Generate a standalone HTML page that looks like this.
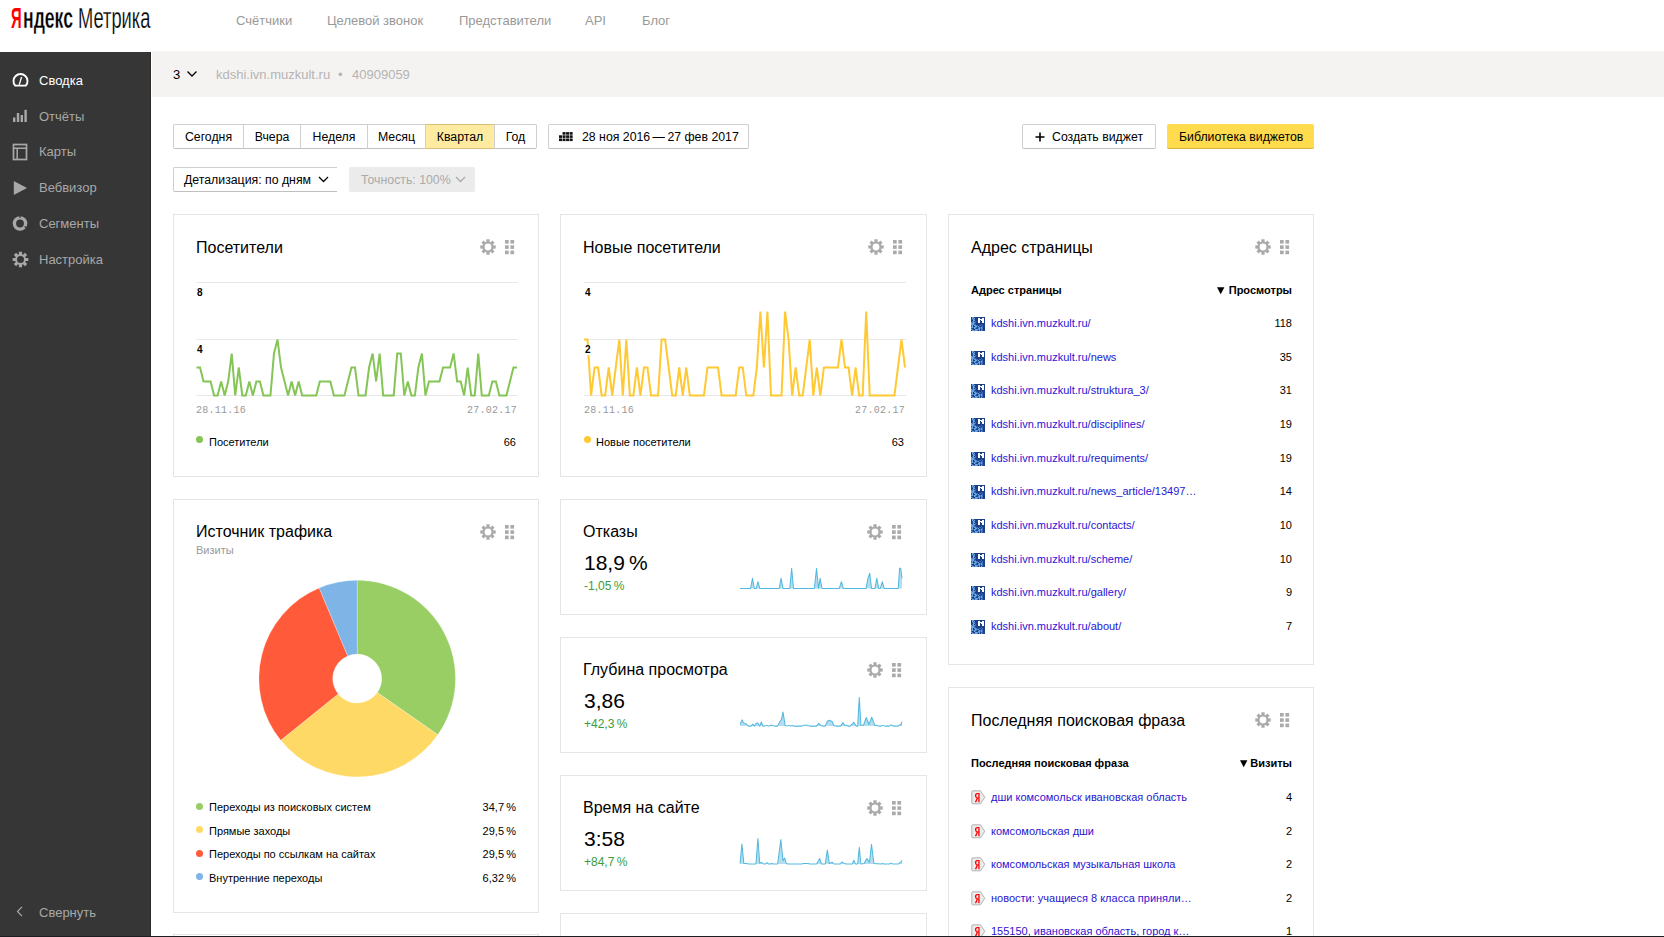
<!DOCTYPE html>
<html><head><meta charset="utf-8"><style>
*{box-sizing:border-box;margin:0;padding:0}
html,body{width:1664px;height:937px;overflow:hidden;background:#fff;font-family:"Liberation Sans",sans-serif;color:#000}
#hdr{position:absolute;left:0;top:0;width:1664px;height:51px;background:#fff}
.logo{position:absolute;top:4px;font-size:28.6px;line-height:28.6px;white-space:nowrap;transform-origin:0 0}
.logo span{display:inline-block;transform-origin:0 0}
.ya{color:#f00}
.nav{position:absolute;top:13px;font-size:13px;line-height:15px;color:#999;white-space:nowrap}
#side{position:absolute;left:0;top:52px;width:151px;height:885px;background:#363636}
#sedge{position:absolute;right:0;top:0;width:1px;height:885px;background:#2a2a2a}
.si{position:absolute;left:39px;font-size:13px;line-height:13px;color:#a8a8a8;white-space:nowrap}
.si.act{color:#fff}
.sic{position:absolute;left:12px}
#band{position:absolute;left:152px;top:51px;width:1512px;height:46px;background:#f4f3f1}
.bt{position:absolute;top:16px;font-size:13px;line-height:15px;white-space:nowrap}
.seg,.btn{position:absolute;height:25px;border:1px solid #cfcfcf;border-bottom-color:#c0c0c0;border-radius:2px;background:#fff}
.dbtn{position:absolute;height:25px;border-radius:2px;background:#ebebeb}
.ybtn{position:absolute;height:25px;border-radius:2px;background:#ffdb4d;border-bottom:1px solid #d8b33c}
.sbact{position:absolute;height:25px;background:#ffeba0;border:1px solid #d6bf78}
.sdiv{position:absolute;width:1px;height:25px;background:#d0d0d0}
.sbt{position:absolute;height:25px;font-size:12.3px;line-height:26px;text-align:center;white-space:nowrap}
.tt{position:absolute;height:25px;font-size:12.3px;line-height:26px;white-space:nowrap}
.w{position:absolute;border:1px solid #e5e5e5;background:#fff}
.t{position:absolute;white-space:nowrap}
.ic{position:absolute;overflow:visible}
.grid{position:absolute;height:1px;background:#e8e8e8}
.dot{position:absolute;width:7px;height:7px;border-radius:50%}
</style></head><body>

<div id="hdr">
  <div class="logo" style="left:11px;color:#f00;font-weight:bold;transform:scaleX(0.52)">Я</div>
  <div class="logo" style="left:23px;font-weight:bold;transform:scaleX(0.616);-webkit-text-stroke:0.3px #fff">ндекс</div>
  <div class="logo" style="left:78px;transform:scaleX(0.64);-webkit-text-stroke:0.25px #fff">Метрика</div>
  <div class="nav" style="left:236px">Счётчики</div>
  <div class="nav" style="left:327px">Целевой звонок</div>
  <div class="nav" style="left:459px">Представители</div>
  <div class="nav" style="left:585px">API</div>
  <div class="nav" style="left:642px">Блог</div>
</div>
<div id="side">
<div class="si act" style="top:22px">Сводка</div>
<svg class="sic" style="top:20px" width="17" height="15" viewBox="0 0 17 15"><path d="M3.2 13.6 A7 7 0 1 1 13.8 13.6 Z" fill="none" stroke="#fff" stroke-width="1.9" stroke-linejoin="round"/><path d="M7.2 12.8 L9.6 5" stroke="#fff" stroke-width="1.3"/></svg>
<div class="si" style="top:58px">Отчёты</div>
<svg class="sic" style="top:57px" width="16" height="14" viewBox="0 0 16 14"><rect x="1" y="8.5" width="2.4" height="4.5" fill="#a8a8a8"/><rect x="4.8" y="4" width="2.4" height="9" fill="#a8a8a8"/><rect x="8.6" y="6" width="2.4" height="7" fill="#a8a8a8"/><rect x="12.4" y="0.8" width="2.4" height="12.2" fill="#a8a8a8"/></svg>
<div class="si" style="top:93px">Карты</div>
<svg class="sic" style="top:91px" width="17" height="18" viewBox="0 0 17 18"><rect x="1.5" y="1.5" width="13" height="15" fill="none" stroke="#a8a8a8" stroke-width="1.7"/><path d="M1.5 5.2 H14.5 M5.2 5.2 V16.5" stroke="#a8a8a8" stroke-width="1.5" fill="none"/></svg>
<div class="si" style="top:129px">Вебвизор</div>
<svg class="sic" style="top:128px" width="17" height="16" viewBox="0 0 17 16"><path d="M1.8 1 L15 8 L1.8 15 Z" fill="#a8a8a8"/></svg>
<div class="si" style="top:165px">Сегменты</div>
<svg class="sic" style="top:163px" width="17" height="17" viewBox="0 0 17 17"><circle cx="8" cy="8.5" r="5.6" fill="none" stroke="#a8a8a8" stroke-width="3.4"/><path d="M8 2.9 V0" stroke="#363636" stroke-width="1.2"/><path d="M12.6 11.6 L14.8 12.8" stroke="#363636" stroke-width="1.2"/></svg>
<div class="si" style="top:201px">Настройка</div>
<svg class="sic" style="top:199px" width="17" height="17" viewBox="-8.5 -8.5 17 17"><path d="M-1.60 -5.16 L-1.59 -7.84 L1.59 -7.84 L1.60 -5.16 L2.52 -4.78 L4.42 -6.67 L6.67 -4.42 L4.78 -2.52 L5.16 -1.60 L7.84 -1.59 L7.84 1.59 L5.16 1.60 L4.78 2.52 L6.67 4.42 L4.42 6.67 L2.52 4.78 L1.60 5.16 L1.59 7.84 L-1.59 7.84 L-1.60 5.16 L-2.52 4.78 L-4.42 6.67 L-6.67 4.42 L-4.78 2.52 L-5.16 1.60 L-7.84 1.59 L-7.84 -1.59 L-5.16 -1.60 L-4.78 -2.52 L-6.67 -4.42 L-4.42 -6.67 L-2.52 -4.78 Z M3.50 0 A3.50 3.50 0 1 0 -3.50 0 A3.50 3.50 0 1 0 3.50 0 Z" fill="#a8a8a8" fill-rule="evenodd"/></svg>
<div class="si" style="top:854px">Свернуть</div>
<svg class="sic" style="left:15px;top:853px" width="10" height="14" viewBox="0 0 10 14"><path d="M7 1.8 L2.5 6.5 L7 11.2" fill="none" stroke="#a8a8a8" stroke-width="1.2"/></svg>
<div id="sedge"></div>
</div>

<div id="band">
  <div class="bt" style="left:21px;color:#000">3</div>
  <svg style="position:absolute;left:34px;top:19px" width="12" height="8" viewBox="0 0 12 8"><path d="M1.5 1.5 L6 6 L10.5 1.5" fill="none" stroke="#000" stroke-width="1.3"/></svg>
  <div class="bt" style="left:64px;color:#b4b4b4">kdshi.ivn.muzkult.ru</div>
  <div class="bt" style="left:186px;color:#b4b4b4">•</div>
  <div class="bt" style="left:200px;color:#b4b4b4">40909059</div>
</div>
<div class="seg" style="left:173px;top:124px;width:364px"></div>
<div class="sbt" style="left:173px;width:71px;top:124px">Сегодня</div>
<div class="sbt" style="left:243px;width:58px;top:124px">Вчера</div>
<div class="sdiv" style="left:243px;top:124px"></div>
<div class="sbt" style="left:300px;width:68px;top:124px">Неделя</div>
<div class="sdiv" style="left:300px;top:124px"></div>
<div class="sbt" style="left:367px;width:59px;top:124px">Месяц</div>
<div class="sdiv" style="left:367px;top:124px"></div>
<div class="sbact" style="left:425px;top:124px;width:70px"></div>
<div class="sbt" style="left:425px;width:70px;top:124px">Квартал</div>
<div class="sdiv" style="left:425px;top:124px"></div>
<div class="sbt" style="left:494px;width:43px;top:124px">Год</div>
<div class="sdiv" style="left:494px;top:124px"></div>
<div class="btn" style="left:548px;top:124px;width:201px"></div>
<svg style="position:absolute;left:559px;top:132px" width="15" height="10" viewBox="0 0 15 10"><rect x="3.55" y="0.10" width="3.0" height="2.6" fill="#111"/><rect x="7.10" y="0.10" width="3.0" height="2.6" fill="#111"/><rect x="10.65" y="0.10" width="3.0" height="2.6" fill="#111"/><rect x="0.00" y="3.30" width="3.0" height="2.6" fill="#111"/><rect x="3.55" y="3.30" width="3.0" height="2.6" fill="#111"/><rect x="7.10" y="3.30" width="3.0" height="2.6" fill="#111"/><rect x="10.65" y="3.30" width="3.0" height="2.6" fill="#111"/><rect x="0.00" y="6.50" width="3.0" height="2.6" fill="#111"/><rect x="3.55" y="6.50" width="3.0" height="2.6" fill="#111"/><rect x="7.10" y="6.50" width="3.0" height="2.6" fill="#111"/><rect x="10.65" y="6.50" width="3.0" height="2.6" fill="#111"/></svg>
<div class="tt" style="left:582px;top:124px">28 ноя 2016&#8201;—&#8201;27 фев 2017</div>
<div class="btn" style="left:1022px;top:124px;width:134px"></div>
<svg style="position:absolute;left:1035px;top:132px" width="10" height="10" viewBox="0 0 10 10"><path d="M5 0.5 V9.5 M0.5 5 H9.5" stroke="#000" stroke-width="1.6"/></svg>
<div class="tt" style="left:1052px;top:124px">Создать виджет</div>
<div class="ybtn" style="left:1167px;top:124px;width:147px"></div>
<div class="tt" style="left:1179px;top:124px">Библиотека виджетов</div>
<div class="btn" style="left:173px;top:167px;width:164px;border-right:none;border-top-right-radius:0;border-bottom-right-radius:0"></div>
<div class="tt" style="left:184px;top:167px">Детализация: по дням</div>
<svg style="position:absolute;left:318px;top:176px" width="11" height="7" viewBox="0 0 11 7"><path d="M1 1 L5.5 5.5 L10 1" fill="none" stroke="#000" stroke-width="1.3"/></svg>
<div class="dbtn" style="left:349px;top:167px;width:126px"></div>
<div class="tt" style="left:361px;top:167px;color:#aaa">Точность: 100%</div>
<svg style="position:absolute;left:455px;top:176px" width="11" height="7" viewBox="0 0 11 7"><path d="M1 1 L5.5 5.5 L10 1" fill="none" stroke="#aaa" stroke-width="1.3"/></svg>
<div class="w" style="left:173px;top:214px;width:366px;height:263px"></div>
<div class="t" style="left:196px;top:240.00px;font-size:16px;line-height:16px;">Посетители</div>
<svg class="ic" style="left:479.0px;top:238px" width="18" height="18" viewBox="-9 -9 18 18"><path d="M-1.63 -5.25 L-1.57 -7.74 L1.57 -7.74 L1.63 -5.25 L2.57 -4.86 L4.36 -6.58 L6.58 -4.36 L4.86 -2.57 L5.25 -1.63 L7.74 -1.57 L7.74 1.57 L5.25 1.63 L4.86 2.57 L6.58 4.36 L4.36 6.58 L2.57 4.86 L1.63 5.25 L1.57 7.74 L-1.57 7.74 L-1.63 5.25 L-2.57 4.86 L-4.36 6.58 L-6.58 4.36 L-4.86 2.57 L-5.25 1.63 L-7.74 1.57 L-7.74 -1.57 L-5.25 -1.63 L-4.86 -2.57 L-6.58 -4.36 L-4.36 -6.58 L-2.57 -4.86 Z M3.40 0 A3.40 3.40 0 1 0 -3.40 0 A3.40 3.40 0 1 0 3.40 0 Z" fill="#aaa" fill-rule="evenodd"/></svg><svg class="ic" style="left:505.0px;top:240px" width="10" height="16" viewBox="0 0 10 16"><rect x="0.00" y="0.00" width="3.7" height="3.6" fill="#aaa"/><rect x="5.40" y="0.00" width="3.7" height="3.6" fill="#aaa"/><rect x="0.00" y="5.30" width="3.7" height="3.6" fill="#aaa"/><rect x="5.40" y="5.30" width="3.7" height="3.6" fill="#aaa"/><rect x="0.00" y="10.60" width="3.7" height="3.6" fill="#aaa"/><rect x="5.40" y="10.60" width="3.7" height="3.6" fill="#aaa"/></svg>
<div class="grid" style="left:196px;top:282px;width:322px"></div>
<div class="grid" style="left:196px;top:339px;width:322px"></div>
<div class="grid" style="left:196px;top:395px;width:322px"></div>
<div class="t" style="left:196px;top:406.00px;font-size:10px;line-height:10px;font-family:'Liberation Mono',monospace;color:#999;letter-spacing:0.25px">28.11.16</div>
<div class="t" style="right:1147px;top:406.00px;font-size:10px;line-height:10px;text-align:right;font-family:'Liberation Mono',monospace;color:#999;letter-spacing:0.25px">27.02.17</div>
<svg class="ic" style="left:0;top:0" width="1664" height="937"><polyline points="196.50,367.50 200.02,367.50 203.54,381.50 207.07,381.50 210.59,381.50 214.11,395.50 217.63,395.50 221.15,381.50 224.68,395.50 228.20,381.50 231.72,353.50 235.24,395.50 238.76,367.50 242.29,395.50 245.81,395.50 249.33,381.50 252.85,395.50 256.37,381.50 259.90,381.50 263.42,395.50 266.94,395.50 270.46,395.50 273.98,353.50 277.51,339.50 281.03,367.50 284.55,381.50 288.07,395.50 291.59,381.50 295.12,395.50 298.64,381.50 302.16,395.50 305.68,395.50 309.20,395.50 312.73,395.50 316.25,395.50 319.77,381.50 323.29,381.50 326.81,381.50 330.34,381.50 333.86,395.50 337.38,395.50 340.90,395.50 344.42,395.50 347.95,381.50 351.47,367.50 354.99,367.50 358.51,395.50 362.03,395.50 365.55,395.50 369.08,367.50 372.60,353.50 376.12,381.50 379.64,353.50 383.16,395.50 386.69,395.50 390.21,395.50 393.73,395.50 397.25,353.50 400.77,353.50 404.30,395.50 407.82,381.50 411.34,395.50 414.86,395.50 418.38,367.50 421.91,353.50 425.43,395.50 428.95,381.50 432.47,381.50 435.99,381.50 439.52,381.50 443.04,367.50 446.56,367.50 450.08,367.50 453.60,353.50 457.13,381.50 460.65,381.50 464.17,395.50 467.69,367.50 471.21,395.50 474.74,395.50 478.26,353.50 481.78,395.50 485.30,395.50 488.82,395.50 492.35,381.50 495.87,381.50 499.39,395.50 502.91,395.50 506.43,395.50 509.96,381.50 513.48,367.50 517.00,367.50" fill="none" stroke="#84c556" stroke-width="2" stroke-linejoin="miter" stroke-miterlimit="3"/></svg>
<div class="t" style="left:197px;top:288.00px;font-size:10px;line-height:10px;font-weight:bold;background:#fff;padding:0 1px;margin-left:-1px">8</div>
<div class="t" style="left:197px;top:345.00px;font-size:10px;line-height:10px;font-weight:bold;background:#fff;padding:0 1px;margin-left:-1px">4</div>
<div class="dot" style="left:196px;top:436px;background:#84c556"></div>
<div class="t" style="left:209px;top:437.00px;font-size:11px;line-height:11px;">Посетители</div>
<div class="t" style="right:1148px;top:437.00px;font-size:11px;line-height:11px;text-align:right;">66</div>
<div class="w" style="left:560px;top:214px;width:367px;height:263px"></div>
<div class="t" style="left:583px;top:240.00px;font-size:16px;line-height:16px;">Новые посетители</div>
<svg class="ic" style="left:866.5px;top:238px" width="18" height="18" viewBox="-9 -9 18 18"><path d="M-1.63 -5.25 L-1.57 -7.74 L1.57 -7.74 L1.63 -5.25 L2.57 -4.86 L4.36 -6.58 L6.58 -4.36 L4.86 -2.57 L5.25 -1.63 L7.74 -1.57 L7.74 1.57 L5.25 1.63 L4.86 2.57 L6.58 4.36 L4.36 6.58 L2.57 4.86 L1.63 5.25 L1.57 7.74 L-1.57 7.74 L-1.63 5.25 L-2.57 4.86 L-4.36 6.58 L-6.58 4.36 L-4.86 2.57 L-5.25 1.63 L-7.74 1.57 L-7.74 -1.57 L-5.25 -1.63 L-4.86 -2.57 L-6.58 -4.36 L-4.36 -6.58 L-2.57 -4.86 Z M3.40 0 A3.40 3.40 0 1 0 -3.40 0 A3.40 3.40 0 1 0 3.40 0 Z" fill="#aaa" fill-rule="evenodd"/></svg><svg class="ic" style="left:892.5px;top:240px" width="10" height="16" viewBox="0 0 10 16"><rect x="0.00" y="0.00" width="3.7" height="3.6" fill="#aaa"/><rect x="5.40" y="0.00" width="3.7" height="3.6" fill="#aaa"/><rect x="0.00" y="5.30" width="3.7" height="3.6" fill="#aaa"/><rect x="5.40" y="5.30" width="3.7" height="3.6" fill="#aaa"/><rect x="0.00" y="10.60" width="3.7" height="3.6" fill="#aaa"/><rect x="5.40" y="10.60" width="3.7" height="3.6" fill="#aaa"/></svg>
<div class="grid" style="left:584px;top:282px;width:322px"></div>
<div class="grid" style="left:584px;top:339px;width:322px"></div>
<div class="grid" style="left:584px;top:395px;width:322px"></div>
<div class="t" style="left:584px;top:406.00px;font-size:10px;line-height:10px;font-family:'Liberation Mono',monospace;color:#999;letter-spacing:0.25px">28.11.16</div>
<div class="t" style="right:759px;top:406.00px;font-size:10px;line-height:10px;text-align:right;font-family:'Liberation Mono',monospace;color:#999;letter-spacing:0.25px">27.02.17</div>
<svg class="ic" style="left:0;top:0" width="1664" height="937"><polyline points="584.00,339.50 587.53,339.50 591.05,395.50 594.58,367.50 598.11,367.50 601.64,395.50 605.16,395.50 608.69,367.50 612.22,395.50 615.75,367.50 619.27,339.50 622.80,395.50 626.33,339.50 629.86,395.50 633.38,395.50 636.91,367.50 640.44,395.50 643.97,367.50 647.49,367.50 651.02,395.50 654.55,395.50 658.08,395.50 661.60,339.50 665.13,339.50 668.66,367.50 672.19,395.50 675.71,395.50 679.24,367.50 682.77,395.50 686.30,367.50 689.82,395.50 693.35,395.50 696.88,395.50 700.41,395.50 703.93,395.50 707.46,367.50 710.99,367.50 714.52,367.50 718.04,367.50 721.57,395.50 725.10,395.50 728.63,395.50 732.15,395.50 735.68,395.50 739.21,367.50 742.74,367.50 746.26,395.50 749.79,395.50 753.32,395.50 756.85,367.50 760.37,311.50 763.90,367.50 767.43,311.50 770.96,395.50 774.48,395.50 778.01,395.50 781.54,395.50 785.07,311.50 788.59,339.50 792.12,395.50 795.65,367.50 799.18,395.50 802.70,395.50 806.23,367.50 809.76,339.50 813.29,395.50 816.81,367.50 820.34,395.50 823.87,367.50 827.40,367.50 830.92,367.50 834.45,367.50 837.98,367.50 841.51,339.50 845.03,367.50 848.56,367.50 852.09,395.50 855.62,367.50 859.14,395.50 862.67,395.50 866.20,311.50 869.73,395.50 873.25,395.50 876.78,395.50 880.31,395.50 883.84,395.50 887.36,395.50 890.89,395.50 894.42,395.50 897.95,367.50 901.47,339.50 905.00,367.50" fill="none" stroke="#ffc933" stroke-width="2" stroke-linejoin="miter" stroke-miterlimit="3"/></svg>
<div class="t" style="left:585px;top:288.00px;font-size:10px;line-height:10px;font-weight:bold;background:#fff;padding:0 1px;margin-left:-1px">4</div>
<div class="t" style="left:585px;top:345.00px;font-size:10px;line-height:10px;font-weight:bold;background:#fff;padding:0 1px;margin-left:-1px">2</div>
<div class="dot" style="left:584px;top:436px;background:#ffc933"></div>
<div class="t" style="left:596px;top:437.00px;font-size:11px;line-height:11px;">Новые посетители</div>
<div class="t" style="right:760px;top:437.00px;font-size:11px;line-height:11px;text-align:right;">63</div>
<svg width="0" height="0" style="position:absolute"><defs><symbol id="fav" viewBox="0 0 14 14"><rect x="0" y="0" width="1" height="1" fill="#1d3f88"/><rect x="1" y="0" width="2" height="1" fill="#66a6dc"/><rect x="3" y="0" width="11" height="1" fill="#1d3f88"/><rect x="0" y="1" width="1" height="1" fill="#1d3f88"/><rect x="1" y="1" width="1" height="1" fill="#66a6dc"/><rect x="2" y="1" width="1" height="1" fill="#3a6db5"/><rect x="3" y="1" width="1" height="1" fill="#66a6dc"/><rect x="4" y="1" width="3" height="1" fill="#1d3f88"/><rect x="7" y="1" width="2" height="1" fill="#ffffff"/><rect x="9" y="1" width="2" height="1" fill="#1d3f88"/><rect x="11" y="1" width="2" height="1" fill="#ffffff"/><rect x="13" y="1" width="1" height="1" fill="#1d3f88"/><rect x="0" y="2" width="1" height="1" fill="#1d3f88"/><rect x="1" y="2" width="1" height="1" fill="#3a6db5"/><rect x="2" y="2" width="1" height="1" fill="#66a6dc"/><rect x="3" y="2" width="1" height="1" fill="#3a6db5"/><rect x="4" y="2" width="3" height="1" fill="#1d3f88"/><rect x="7" y="2" width="6" height="1" fill="#ffffff"/><rect x="13" y="2" width="1" height="1" fill="#1d3f88"/><rect x="0" y="3" width="2" height="1" fill="#1d3f88"/><rect x="2" y="3" width="2" height="1" fill="#66a6dc"/><rect x="4" y="3" width="3" height="1" fill="#1d3f88"/><rect x="7" y="3" width="2" height="1" fill="#ffffff"/><rect x="9" y="3" width="1" height="1" fill="#1d3f88"/><rect x="10" y="3" width="3" height="1" fill="#ffffff"/><rect x="13" y="3" width="1" height="1" fill="#1d3f88"/><rect x="0" y="4" width="1" height="1" fill="#1d3f88"/><rect x="1" y="4" width="1" height="1" fill="#3a6db5"/><rect x="2" y="4" width="1" height="1" fill="#66a6dc"/><rect x="3" y="4" width="1" height="1" fill="#1d3f88"/><rect x="4" y="4" width="1" height="1" fill="#3a6db5"/><rect x="5" y="4" width="2" height="1" fill="#1d3f88"/><rect x="7" y="4" width="2" height="1" fill="#ffffff"/><rect x="9" y="4" width="2" height="1" fill="#1d3f88"/><rect x="11" y="4" width="2" height="1" fill="#ffffff"/><rect x="13" y="4" width="1" height="1" fill="#1d3f88"/><rect x="0" y="5" width="1" height="1" fill="#66a6dc"/><rect x="1" y="5" width="1" height="1" fill="#3a6db5"/><rect x="2" y="5" width="2" height="1" fill="#66a6dc"/><rect x="4" y="5" width="1" height="1" fill="#3a6db5"/><rect x="5" y="5" width="2" height="1" fill="#1d3f88"/><rect x="7" y="5" width="2" height="1" fill="#ffffff"/><rect x="9" y="5" width="2" height="1" fill="#1d3f88"/><rect x="11" y="5" width="2" height="1" fill="#ffffff"/><rect x="13" y="5" width="1" height="1" fill="#1d3f88"/><rect x="0" y="6" width="3" height="1" fill="#66a6dc"/><rect x="3" y="6" width="1" height="1" fill="#3a6db5"/><rect x="4" y="6" width="10" height="1" fill="#1d3f88"/><rect x="0" y="7" width="3" height="1" fill="#66a6dc"/><rect x="3" y="7" width="2" height="1" fill="#3a6db5"/><rect x="5" y="7" width="5" height="1" fill="#1d3f88"/><rect x="10" y="7" width="1" height="1" fill="#3a6db5"/><rect x="11" y="7" width="3" height="1" fill="#1d3f88"/><rect x="0" y="8" width="1" height="1" fill="#3a6db5"/><rect x="1" y="8" width="1" height="1" fill="#66a6dc"/><rect x="2" y="8" width="1" height="1" fill="#1d3f88"/><rect x="3" y="8" width="2" height="1" fill="#66a6dc"/><rect x="5" y="8" width="2" height="1" fill="#3a6db5"/><rect x="7" y="8" width="1" height="1" fill="#1d3f88"/><rect x="8" y="8" width="2" height="1" fill="#3a6db5"/><rect x="10" y="8" width="1" height="1" fill="#1d3f88"/><rect x="11" y="8" width="1" height="1" fill="#3a6db5"/><rect x="12" y="8" width="2" height="1" fill="#1d3f88"/><rect x="0" y="9" width="1" height="1" fill="#3a6db5"/><rect x="1" y="9" width="1" height="1" fill="#66a6dc"/><rect x="2" y="9" width="2" height="1" fill="#1d3f88"/><rect x="4" y="9" width="2" height="1" fill="#66a6dc"/><rect x="6" y="9" width="1" height="1" fill="#3a6db5"/><rect x="7" y="9" width="1" height="1" fill="#66a6dc"/><rect x="8" y="9" width="2" height="1" fill="#1d3f88"/><rect x="10" y="9" width="2" height="1" fill="#3a6db5"/><rect x="12" y="9" width="2" height="1" fill="#1d3f88"/><rect x="0" y="10" width="2" height="1" fill="#66a6dc"/><rect x="2" y="10" width="1" height="1" fill="#3a6db5"/><rect x="3" y="10" width="2" height="1" fill="#66a6dc"/><rect x="5" y="10" width="1" height="1" fill="#3a6db5"/><rect x="6" y="10" width="1" height="1" fill="#1d3f88"/><rect x="7" y="10" width="1" height="1" fill="#3a6db5"/><rect x="8" y="10" width="1" height="1" fill="#66a6dc"/><rect x="9" y="10" width="1" height="1" fill="#3a6db5"/><rect x="10" y="10" width="1" height="1" fill="#66a6dc"/><rect x="11" y="10" width="1" height="1" fill="#3a6db5"/><rect x="12" y="10" width="2" height="1" fill="#1d3f88"/><rect x="0" y="11" width="1" height="1" fill="#3a6db5"/><rect x="1" y="11" width="2" height="1" fill="#1d3f88"/><rect x="3" y="11" width="1" height="1" fill="#66a6dc"/><rect x="4" y="11" width="1" height="1" fill="#3a6db5"/><rect x="5" y="11" width="2" height="1" fill="#1d3f88"/><rect x="7" y="11" width="2" height="1" fill="#66a6dc"/><rect x="9" y="11" width="1" height="1" fill="#3a6db5"/><rect x="10" y="11" width="1" height="1" fill="#66a6dc"/><rect x="11" y="11" width="1" height="1" fill="#3a6db5"/><rect x="12" y="11" width="2" height="1" fill="#1d3f88"/><rect x="0" y="12" width="1" height="1" fill="#66a6dc"/><rect x="1" y="12" width="1" height="1" fill="#3a6db5"/><rect x="2" y="12" width="2" height="1" fill="#1d3f88"/><rect x="4" y="12" width="3" height="1" fill="#66a6dc"/><rect x="7" y="12" width="1" height="1" fill="#3a6db5"/><rect x="8" y="12" width="1" height="1" fill="#66a6dc"/><rect x="9" y="12" width="1" height="1" fill="#1d3f88"/><rect x="10" y="12" width="2" height="1" fill="#3a6db5"/><rect x="12" y="12" width="2" height="1" fill="#1d3f88"/><rect x="0" y="13" width="1" height="1" fill="#1d3f88"/><rect x="1" y="13" width="2" height="1" fill="#66a6dc"/><rect x="3" y="13" width="1" height="1" fill="#3a6db5"/><rect x="4" y="13" width="2" height="1" fill="#66a6dc"/><rect x="6" y="13" width="1" height="1" fill="#3a6db5"/><rect x="7" y="13" width="1" height="1" fill="#1d3f88"/><rect x="8" y="13" width="1" height="1" fill="#66a6dc"/><rect x="9" y="13" width="1" height="1" fill="#1d3f88"/><rect x="10" y="13" width="1" height="1" fill="#66a6dc"/><rect x="11" y="13" width="1" height="1" fill="#3a6db5"/><rect x="12" y="13" width="2" height="1" fill="#1d3f88"/></symbol></defs></svg>
<div class="w" style="left:948px;top:214px;width:366px;height:451px"></div>
<div class="t" style="left:971px;top:240.00px;font-size:16px;line-height:16px;">Адрес страницы</div>
<svg class="ic" style="left:1254px;top:238px" width="18" height="18" viewBox="-9 -9 18 18"><path d="M-1.63 -5.25 L-1.57 -7.74 L1.57 -7.74 L1.63 -5.25 L2.57 -4.86 L4.36 -6.58 L6.58 -4.36 L4.86 -2.57 L5.25 -1.63 L7.74 -1.57 L7.74 1.57 L5.25 1.63 L4.86 2.57 L6.58 4.36 L4.36 6.58 L2.57 4.86 L1.63 5.25 L1.57 7.74 L-1.57 7.74 L-1.63 5.25 L-2.57 4.86 L-4.36 6.58 L-6.58 4.36 L-4.86 2.57 L-5.25 1.63 L-7.74 1.57 L-7.74 -1.57 L-5.25 -1.63 L-4.86 -2.57 L-6.58 -4.36 L-4.36 -6.58 L-2.57 -4.86 Z M3.40 0 A3.40 3.40 0 1 0 -3.40 0 A3.40 3.40 0 1 0 3.40 0 Z" fill="#aaa" fill-rule="evenodd"/></svg><svg class="ic" style="left:1280px;top:240px" width="10" height="16" viewBox="0 0 10 16"><rect x="0.00" y="0.00" width="3.7" height="3.6" fill="#aaa"/><rect x="5.40" y="0.00" width="3.7" height="3.6" fill="#aaa"/><rect x="0.00" y="5.30" width="3.7" height="3.6" fill="#aaa"/><rect x="5.40" y="5.30" width="3.7" height="3.6" fill="#aaa"/><rect x="0.00" y="10.60" width="3.7" height="3.6" fill="#aaa"/><rect x="5.40" y="10.60" width="3.7" height="3.6" fill="#aaa"/></svg>
<div class="t" style="left:971px;top:285.00px;font-size:11px;line-height:11px;font-weight:bold">Адрес страницы</div>
<div class="t" style="right:372px;top:285.00px;font-size:11px;line-height:11px;text-align:right;font-weight:bold">Просмотры</div>
<svg class="ic" style="left:1217px;top:287px" width="8" height="8" viewBox="0 0 8 8"><path d="M0 0.3 H7.4 L3.7 7.2 Z" fill="#000"/></svg>
<svg class="ic" style="left:971px;top:317px" width="14" height="14" viewBox="0 0 14 14" shape-rendering="crispEdges"><use href="#fav"/></svg>
<div class="t" style="left:991px;top:318.00px;font-size:11px;line-height:11px;color:#2a14d2">kdshi.ivn.muzkult.ru/</div>
<div class="t" style="right:372px;top:318.00px;font-size:11px;line-height:11px;text-align:right;">118</div>
<svg class="ic" style="left:971px;top:351px" width="14" height="14" viewBox="0 0 14 14" shape-rendering="crispEdges"><use href="#fav"/></svg>
<div class="t" style="left:991px;top:352.00px;font-size:11px;line-height:11px;color:#2a14d2">kdshi.ivn.muzkult.ru/news</div>
<div class="t" style="right:372px;top:352.00px;font-size:11px;line-height:11px;text-align:right;">35</div>
<svg class="ic" style="left:971px;top:384px" width="14" height="14" viewBox="0 0 14 14" shape-rendering="crispEdges"><use href="#fav"/></svg>
<div class="t" style="left:991px;top:385.00px;font-size:11px;line-height:11px;color:#2a14d2">kdshi.ivn.muzkult.ru/struktura_3/</div>
<div class="t" style="right:372px;top:385.00px;font-size:11px;line-height:11px;text-align:right;">31</div>
<svg class="ic" style="left:971px;top:418px" width="14" height="14" viewBox="0 0 14 14" shape-rendering="crispEdges"><use href="#fav"/></svg>
<div class="t" style="left:991px;top:419.00px;font-size:11px;line-height:11px;color:#2a14d2">kdshi.ivn.muzkult.ru/disciplines/</div>
<div class="t" style="right:372px;top:419.00px;font-size:11px;line-height:11px;text-align:right;">19</div>
<svg class="ic" style="left:971px;top:452px" width="14" height="14" viewBox="0 0 14 14" shape-rendering="crispEdges"><use href="#fav"/></svg>
<div class="t" style="left:991px;top:453.00px;font-size:11px;line-height:11px;color:#2a14d2">kdshi.ivn.muzkult.ru/requiments/</div>
<div class="t" style="right:372px;top:453.00px;font-size:11px;line-height:11px;text-align:right;">19</div>
<svg class="ic" style="left:971px;top:485px" width="14" height="14" viewBox="0 0 14 14" shape-rendering="crispEdges"><use href="#fav"/></svg>
<div class="t" style="left:991px;top:486.00px;font-size:11px;line-height:11px;color:#2a14d2">kdshi.ivn.muzkult.ru/news_article/13497…</div>
<div class="t" style="right:372px;top:486.00px;font-size:11px;line-height:11px;text-align:right;">14</div>
<svg class="ic" style="left:971px;top:519px" width="14" height="14" viewBox="0 0 14 14" shape-rendering="crispEdges"><use href="#fav"/></svg>
<div class="t" style="left:991px;top:520.00px;font-size:11px;line-height:11px;color:#2a14d2">kdshi.ivn.muzkult.ru/contacts/</div>
<div class="t" style="right:372px;top:520.00px;font-size:11px;line-height:11px;text-align:right;">10</div>
<svg class="ic" style="left:971px;top:553px" width="14" height="14" viewBox="0 0 14 14" shape-rendering="crispEdges"><use href="#fav"/></svg>
<div class="t" style="left:991px;top:554.00px;font-size:11px;line-height:11px;color:#2a14d2">kdshi.ivn.muzkult.ru/scheme/</div>
<div class="t" style="right:372px;top:554.00px;font-size:11px;line-height:11px;text-align:right;">10</div>
<svg class="ic" style="left:971px;top:586px" width="14" height="14" viewBox="0 0 14 14" shape-rendering="crispEdges"><use href="#fav"/></svg>
<div class="t" style="left:991px;top:587.00px;font-size:11px;line-height:11px;color:#2a14d2">kdshi.ivn.muzkult.ru/gallery/</div>
<div class="t" style="right:372px;top:587.00px;font-size:11px;line-height:11px;text-align:right;">9</div>
<svg class="ic" style="left:971px;top:620px" width="14" height="14" viewBox="0 0 14 14" shape-rendering="crispEdges"><use href="#fav"/></svg>
<div class="t" style="left:991px;top:621.00px;font-size:11px;line-height:11px;color:#2a14d2">kdshi.ivn.muzkult.ru/about/</div>
<div class="t" style="right:372px;top:621.00px;font-size:11px;line-height:11px;text-align:right;">7</div>
<div class="w" style="left:173px;top:499px;width:366px;height:414px"></div>
<div class="t" style="left:196px;top:524.00px;font-size:16px;line-height:16px;">Источник трафика</div>
<div class="t" style="left:196px;top:545.00px;font-size:11px;line-height:11px;color:#999">Визиты</div>
<svg class="ic" style="left:479px;top:523px" width="18" height="18" viewBox="-9 -9 18 18"><path d="M-1.63 -5.25 L-1.57 -7.74 L1.57 -7.74 L1.63 -5.25 L2.57 -4.86 L4.36 -6.58 L6.58 -4.36 L4.86 -2.57 L5.25 -1.63 L7.74 -1.57 L7.74 1.57 L5.25 1.63 L4.86 2.57 L6.58 4.36 L4.36 6.58 L2.57 4.86 L1.63 5.25 L1.57 7.74 L-1.57 7.74 L-1.63 5.25 L-2.57 4.86 L-4.36 6.58 L-6.58 4.36 L-4.86 2.57 L-5.25 1.63 L-7.74 1.57 L-7.74 -1.57 L-5.25 -1.63 L-4.86 -2.57 L-6.58 -4.36 L-4.36 -6.58 L-2.57 -4.86 Z M3.40 0 A3.40 3.40 0 1 0 -3.40 0 A3.40 3.40 0 1 0 3.40 0 Z" fill="#aaa" fill-rule="evenodd"/></svg><svg class="ic" style="left:505px;top:525px" width="10" height="16" viewBox="0 0 10 16"><rect x="0.00" y="0.00" width="3.7" height="3.6" fill="#aaa"/><rect x="5.40" y="0.00" width="3.7" height="3.6" fill="#aaa"/><rect x="0.00" y="5.30" width="3.7" height="3.6" fill="#aaa"/><rect x="5.40" y="5.30" width="3.7" height="3.6" fill="#aaa"/><rect x="0.00" y="10.60" width="3.7" height="3.6" fill="#aaa"/><rect x="5.40" y="10.60" width="3.7" height="3.6" fill="#aaa"/></svg>
<svg class="ic" style="left:0;top:0" width="1664" height="937"><path d="M357.20 580.30 A98.3 98.3 0 0 1 437.83 734.83 L377.29 692.62 A24.5 24.5 0 0 0 357.20 654.10 Z" fill="#98ce64" stroke="#fff" stroke-width="0.25"/><path d="M437.83 734.83 A98.3 98.3 0 0 1 280.73 740.36 L338.14 693.99 A24.5 24.5 0 0 0 377.29 692.62 Z" fill="#ffd966" stroke="#fff" stroke-width="0.25"/><path d="M280.73 740.36 A98.3 98.3 0 0 1 319.19 587.95 L347.73 656.01 A24.5 24.5 0 0 0 338.14 693.99 Z" fill="#ff5b3b" stroke="#fff" stroke-width="0.25"/><path d="M319.19 587.95 A98.3 98.3 0 0 1 357.20 580.30 L357.20 654.10 A24.5 24.5 0 0 0 347.73 656.01 Z" fill="#7eb5e6" stroke="#fff" stroke-width="0.25"/></svg>
<div class="dot" style="left:196px;top:802.5px;background:#98ce64"></div>
<div class="t" style="left:209px;top:802.00px;font-size:11px;line-height:11px;">Переходы из поисковых систем</div>
<div class="t" style="right:1148px;top:802.00px;font-size:11px;line-height:11px;text-align:right;">34,7&#8201;%</div>
<div class="dot" style="left:196px;top:826.1px;background:#ffd966"></div>
<div class="t" style="left:209px;top:826.00px;font-size:11px;line-height:11px;">Прямые заходы</div>
<div class="t" style="right:1148px;top:826.00px;font-size:11px;line-height:11px;text-align:right;">29,5&#8201;%</div>
<div class="dot" style="left:196px;top:849.7px;background:#ff5b3b"></div>
<div class="t" style="left:209px;top:849.00px;font-size:11px;line-height:11px;">Переходы по ссылкам на сайтах</div>
<div class="t" style="right:1148px;top:849.00px;font-size:11px;line-height:11px;text-align:right;">29,5&#8201;%</div>
<div class="dot" style="left:196px;top:873.3px;background:#7eb5e6"></div>
<div class="t" style="left:209px;top:873.00px;font-size:11px;line-height:11px;">Внутренние переходы</div>
<div class="t" style="right:1148px;top:873.00px;font-size:11px;line-height:11px;text-align:right;">6,32&#8201;%</div>
<div class="w" style="left:560px;top:499px;width:367px;height:116px"></div>
<div class="t" style="left:583px;top:524.00px;font-size:16px;line-height:16px;">Отказы</div>
<svg class="ic" style="left:866px;top:523px" width="18" height="18" viewBox="-9 -9 18 18"><path d="M-1.63 -5.25 L-1.57 -7.74 L1.57 -7.74 L1.63 -5.25 L2.57 -4.86 L4.36 -6.58 L6.58 -4.36 L4.86 -2.57 L5.25 -1.63 L7.74 -1.57 L7.74 1.57 L5.25 1.63 L4.86 2.57 L6.58 4.36 L4.36 6.58 L2.57 4.86 L1.63 5.25 L1.57 7.74 L-1.57 7.74 L-1.63 5.25 L-2.57 4.86 L-4.36 6.58 L-6.58 4.36 L-4.86 2.57 L-5.25 1.63 L-7.74 1.57 L-7.74 -1.57 L-5.25 -1.63 L-4.86 -2.57 L-6.58 -4.36 L-4.36 -6.58 L-2.57 -4.86 Z M3.40 0 A3.40 3.40 0 1 0 -3.40 0 A3.40 3.40 0 1 0 3.40 0 Z" fill="#aaa" fill-rule="evenodd"/></svg><svg class="ic" style="left:892px;top:525px" width="10" height="16" viewBox="0 0 10 16"><rect x="0.00" y="0.00" width="3.7" height="3.6" fill="#aaa"/><rect x="5.40" y="0.00" width="3.7" height="3.6" fill="#aaa"/><rect x="0.00" y="5.30" width="3.7" height="3.6" fill="#aaa"/><rect x="5.40" y="5.30" width="3.7" height="3.6" fill="#aaa"/><rect x="0.00" y="10.60" width="3.7" height="3.6" fill="#aaa"/><rect x="5.40" y="10.60" width="3.7" height="3.6" fill="#aaa"/></svg>
<div class="t" style="left:584px;top:552.00px;font-size:21px;line-height:21px;">18,9&#8201;%</div>
<div class="t" style="left:584px;top:580.00px;font-size:12px;line-height:12px;color:#3a9d3a">-1,05&#8201;%</div>
<svg class="ic" style="left:730px;top:550px" width="180" height="50" viewBox="0 0 1664 462"><path d="M93,355 L93,355 L190,355 L208,262 L225,355 L243,355 L258,293 L275,355 L455,355 L472,262 L490,355 L553,355 L570,168 L587,355 L780,355 L800,168 L818,355 L833,262 L850,355 L1010,355 L1030,293 L1048,355 L1258,355 L1275,262 L1292,215 L1308,355 L1340,355 L1357,262 L1375,355 L1390,355 L1408,293 L1425,355 L1555,355 L1568,168 L1578,168 L1590,262 L1590,355 Z" fill="#b5ddef"/><polyline points="93,355 190,355 208,262 225,355 243,355 258,293 275,355 455,355 472,262 490,355 553,355 570,168 587,355 780,355 800,168 818,355 833,262 850,355 1010,355 1030,293 1048,355 1258,355 1275,262 1292,215 1308,355 1340,355 1357,262 1375,355 1390,355 1408,293 1425,355 1555,355 1568,168 1578,168 1590,262" fill="none" stroke="#52b9de" stroke-width="9.5" stroke-linejoin="round"/></svg>
<div class="w" style="left:560px;top:637px;width:367px;height:116px"></div>
<div class="t" style="left:583px;top:662.00px;font-size:16px;line-height:16px;">Глубина просмотра</div>
<svg class="ic" style="left:866px;top:661px" width="18" height="18" viewBox="-9 -9 18 18"><path d="M-1.63 -5.25 L-1.57 -7.74 L1.57 -7.74 L1.63 -5.25 L2.57 -4.86 L4.36 -6.58 L6.58 -4.36 L4.86 -2.57 L5.25 -1.63 L7.74 -1.57 L7.74 1.57 L5.25 1.63 L4.86 2.57 L6.58 4.36 L4.36 6.58 L2.57 4.86 L1.63 5.25 L1.57 7.74 L-1.57 7.74 L-1.63 5.25 L-2.57 4.86 L-4.36 6.58 L-6.58 4.36 L-4.86 2.57 L-5.25 1.63 L-7.74 1.57 L-7.74 -1.57 L-5.25 -1.63 L-4.86 -2.57 L-6.58 -4.36 L-4.36 -6.58 L-2.57 -4.86 Z M3.40 0 A3.40 3.40 0 1 0 -3.40 0 A3.40 3.40 0 1 0 3.40 0 Z" fill="#aaa" fill-rule="evenodd"/></svg><svg class="ic" style="left:892px;top:663px" width="10" height="16" viewBox="0 0 10 16"><rect x="0.00" y="0.00" width="3.7" height="3.6" fill="#aaa"/><rect x="5.40" y="0.00" width="3.7" height="3.6" fill="#aaa"/><rect x="0.00" y="5.30" width="3.7" height="3.6" fill="#aaa"/><rect x="5.40" y="5.30" width="3.7" height="3.6" fill="#aaa"/><rect x="0.00" y="10.60" width="3.7" height="3.6" fill="#aaa"/><rect x="5.40" y="10.60" width="3.7" height="3.6" fill="#aaa"/></svg>
<div class="t" style="left:584px;top:690.00px;font-size:21px;line-height:21px;">3,86</div>
<div class="t" style="left:584px;top:718.00px;font-size:12px;line-height:12px;color:#3a9d3a">+42,3&#8201;%</div>
<svg class="ic" style="left:730px;top:685px" width="180" height="50" viewBox="0 0 1664 462"><path d="M93,380 L93,365 L112,322 L125,350 L140,355 L155,365 L170,380 L195,380 L210,362 L225,380 L240,358 L255,350 L265,365 L275,380 L290,342 L305,380 L320,380 L340,373 L355,380 L370,375 L390,373 L410,380 L440,380 L460,340 L475,320 L490,250 L510,375 L525,380 L545,373 L560,380 L575,375 L590,380 L665,380 L680,373 L720,373 L735,380 L800,380 L820,355 L840,375 L860,380 L880,380 L900,335 L920,325 L945,340 L960,375 L980,380 L1020,380 L1045,348 L1060,375 L1075,372 L1090,380 L1110,380 L1145,345 L1165,380 L1180,380 L1195,115 L1210,375 L1235,370 L1260,300 L1285,365 L1310,298 L1340,375 L1355,372 L1375,380 L1395,380 L1410,373 L1430,380 L1475,380 L1490,368 L1510,380 L1550,380 L1565,372 L1580,365 L1590,340 L1590,380 Z" fill="#b5ddef"/><polyline points="93,365 112,322 125,350 140,355 155,365 170,380 195,380 210,362 225,380 240,358 255,350 265,365 275,380 290,342 305,380 320,380 340,373 355,380 370,375 390,373 410,380 440,380 460,340 475,320 490,250 510,375 525,380 545,373 560,380 575,375 590,380 665,380 680,373 720,373 735,380 800,380 820,355 840,375 860,380 880,380 900,335 920,325 945,340 960,375 980,380 1020,380 1045,348 1060,375 1075,372 1090,380 1110,380 1145,345 1165,380 1180,380 1195,115 1210,375 1235,370 1260,300 1285,365 1310,298 1340,375 1355,372 1375,380 1395,380 1410,373 1430,380 1475,380 1490,368 1510,380 1550,380 1565,372 1580,365 1590,340" fill="none" stroke="#52b9de" stroke-width="9.5" stroke-linejoin="round"/></svg>
<div class="w" style="left:560px;top:775px;width:367px;height:116px"></div>
<div class="t" style="left:583px;top:800.00px;font-size:16px;line-height:16px;">Время на сайте</div>
<svg class="ic" style="left:866px;top:799px" width="18" height="18" viewBox="-9 -9 18 18"><path d="M-1.63 -5.25 L-1.57 -7.74 L1.57 -7.74 L1.63 -5.25 L2.57 -4.86 L4.36 -6.58 L6.58 -4.36 L4.86 -2.57 L5.25 -1.63 L7.74 -1.57 L7.74 1.57 L5.25 1.63 L4.86 2.57 L6.58 4.36 L4.36 6.58 L2.57 4.86 L1.63 5.25 L1.57 7.74 L-1.57 7.74 L-1.63 5.25 L-2.57 4.86 L-4.36 6.58 L-6.58 4.36 L-4.86 2.57 L-5.25 1.63 L-7.74 1.57 L-7.74 -1.57 L-5.25 -1.63 L-4.86 -2.57 L-6.58 -4.36 L-4.36 -6.58 L-2.57 -4.86 Z M3.40 0 A3.40 3.40 0 1 0 -3.40 0 A3.40 3.40 0 1 0 3.40 0 Z" fill="#aaa" fill-rule="evenodd"/></svg><svg class="ic" style="left:892px;top:801px" width="10" height="16" viewBox="0 0 10 16"><rect x="0.00" y="0.00" width="3.7" height="3.6" fill="#aaa"/><rect x="5.40" y="0.00" width="3.7" height="3.6" fill="#aaa"/><rect x="0.00" y="5.30" width="3.7" height="3.6" fill="#aaa"/><rect x="5.40" y="5.30" width="3.7" height="3.6" fill="#aaa"/><rect x="0.00" y="10.60" width="3.7" height="3.6" fill="#aaa"/><rect x="5.40" y="10.60" width="3.7" height="3.6" fill="#aaa"/></svg>
<div class="t" style="left:584px;top:828.00px;font-size:21px;line-height:21px;">3:58</div>
<div class="t" style="left:584px;top:856.00px;font-size:12px;line-height:12px;color:#3a9d3a">+84,7&#8201;%</div>
<svg class="ic" style="left:730px;top:825px" width="180" height="50" viewBox="0 0 1664 462"><path d="M93,360 L93,355 L110,175 L128,355 L150,355 L175,360 L240,360 L258,125 L275,355 L290,345 L310,360 L330,360 L342,348 L355,360 L370,360 L385,355 L400,360 L440,360 L470,135 L490,330 L505,305 L520,355 L535,360 L660,360 L680,355 L720,355 L740,360 L800,360 L830,310 L845,360 L880,360 L900,232 L918,355 L945,345 L960,360 L1020,360 L1035,340 L1055,355 L1075,360 L1130,360 L1145,325 L1160,360 L1180,360 L1195,205 L1210,360 L1240,355 L1265,310 L1290,345 L1308,178 L1330,355 L1400,360 L1410,355 L1420,360 L1475,360 L1490,352 L1505,360 L1560,360 L1580,340 L1590,325 L1590,360 Z" fill="#b5ddef"/><polyline points="93,355 110,175 128,355 150,355 175,360 240,360 258,125 275,355 290,345 310,360 330,360 342,348 355,360 370,360 385,355 400,360 440,360 470,135 490,330 505,305 520,355 535,360 660,360 680,355 720,355 740,360 800,360 830,310 845,360 880,360 900,232 918,355 945,345 960,360 1020,360 1035,340 1055,355 1075,360 1130,360 1145,325 1160,360 1180,360 1195,205 1210,360 1240,355 1265,310 1290,345 1308,178 1330,355 1400,360 1410,355 1420,360 1475,360 1490,352 1505,360 1560,360 1580,340 1590,325" fill="none" stroke="#52b9de" stroke-width="9.5" stroke-linejoin="round"/></svg>
<div class="w" style="left:560px;top:913px;width:367px;height:100px"></div>
<div class="w" style="left:173px;top:934px;width:366px;height:100px"></div>
<div class="w" style="left:948px;top:687px;width:366px;height:300px"></div>
<div class="t" style="left:971px;top:713.00px;font-size:16px;line-height:16px;">Последняя поисковая фраза</div>
<svg class="ic" style="left:1254px;top:711px" width="18" height="18" viewBox="-9 -9 18 18"><path d="M-1.63 -5.25 L-1.57 -7.74 L1.57 -7.74 L1.63 -5.25 L2.57 -4.86 L4.36 -6.58 L6.58 -4.36 L4.86 -2.57 L5.25 -1.63 L7.74 -1.57 L7.74 1.57 L5.25 1.63 L4.86 2.57 L6.58 4.36 L4.36 6.58 L2.57 4.86 L1.63 5.25 L1.57 7.74 L-1.57 7.74 L-1.63 5.25 L-2.57 4.86 L-4.36 6.58 L-6.58 4.36 L-4.86 2.57 L-5.25 1.63 L-7.74 1.57 L-7.74 -1.57 L-5.25 -1.63 L-4.86 -2.57 L-6.58 -4.36 L-4.36 -6.58 L-2.57 -4.86 Z M3.40 0 A3.40 3.40 0 1 0 -3.40 0 A3.40 3.40 0 1 0 3.40 0 Z" fill="#aaa" fill-rule="evenodd"/></svg><svg class="ic" style="left:1280px;top:713px" width="10" height="16" viewBox="0 0 10 16"><rect x="0.00" y="0.00" width="3.7" height="3.6" fill="#aaa"/><rect x="5.40" y="0.00" width="3.7" height="3.6" fill="#aaa"/><rect x="0.00" y="5.30" width="3.7" height="3.6" fill="#aaa"/><rect x="5.40" y="5.30" width="3.7" height="3.6" fill="#aaa"/><rect x="0.00" y="10.60" width="3.7" height="3.6" fill="#aaa"/><rect x="5.40" y="10.60" width="3.7" height="3.6" fill="#aaa"/></svg>
<div class="t" style="left:971px;top:758.00px;font-size:11px;line-height:11px;font-weight:bold">Последняя поисковая фраза</div>
<div class="t" style="right:372px;top:758.00px;font-size:11px;line-height:11px;text-align:right;font-weight:bold">Визиты</div>
<svg class="ic" style="left:1240px;top:760px" width="8" height="8" viewBox="0 0 8 8"><path d="M0 0.3 H7.4 L3.7 7.2 Z" fill="#000"/></svg>
<svg class="ic" style="left:971px;top:790px" width="15" height="15" viewBox="0 0 15 15"><path d="M1.6 0.8 H9.5 L13.8 7.3 L9.5 13.8 H1.6 Q0.8 13.8 0.8 13 V1.6 Q0.8 0.8 1.6 0.8 Z" fill="#e9ecec" stroke="#b3b3b3" stroke-width="1"/><path d="M8.6 2.9 H6.4 Q3.9 2.9 3.9 5.6 Q3.9 7.6 5.6 8.3 L3.8 12.2 H5.3 L6.9 8.6 H7.3 V12.2 H8.6 Z M7.3 4.0 V7.6 H6.7 Q5.3 7.6 5.3 5.8 Q5.3 4.0 6.6 4.0 Z" fill="#f00" fill-rule="evenodd"/></svg>
<div class="t" style="left:991px;top:792.00px;font-size:11px;line-height:11px;color:#2a14d2">дши комсомольск ивановская область</div>
<div class="t" style="right:372px;top:792.00px;font-size:11px;line-height:11px;text-align:right;">4</div>
<svg class="ic" style="left:971px;top:824px" width="15" height="15" viewBox="0 0 15 15"><path d="M1.6 0.8 H9.5 L13.8 7.3 L9.5 13.8 H1.6 Q0.8 13.8 0.8 13 V1.6 Q0.8 0.8 1.6 0.8 Z" fill="#e9ecec" stroke="#b3b3b3" stroke-width="1"/><path d="M8.6 2.9 H6.4 Q3.9 2.9 3.9 5.6 Q3.9 7.6 5.6 8.3 L3.8 12.2 H5.3 L6.9 8.6 H7.3 V12.2 H8.6 Z M7.3 4.0 V7.6 H6.7 Q5.3 7.6 5.3 5.8 Q5.3 4.0 6.6 4.0 Z" fill="#f00" fill-rule="evenodd"/></svg>
<div class="t" style="left:991px;top:826.00px;font-size:11px;line-height:11px;color:#2a14d2">комсомольская дши</div>
<div class="t" style="right:372px;top:826.00px;font-size:11px;line-height:11px;text-align:right;">2</div>
<svg class="ic" style="left:971px;top:857px" width="15" height="15" viewBox="0 0 15 15"><path d="M1.6 0.8 H9.5 L13.8 7.3 L9.5 13.8 H1.6 Q0.8 13.8 0.8 13 V1.6 Q0.8 0.8 1.6 0.8 Z" fill="#e9ecec" stroke="#b3b3b3" stroke-width="1"/><path d="M8.6 2.9 H6.4 Q3.9 2.9 3.9 5.6 Q3.9 7.6 5.6 8.3 L3.8 12.2 H5.3 L6.9 8.6 H7.3 V12.2 H8.6 Z M7.3 4.0 V7.6 H6.7 Q5.3 7.6 5.3 5.8 Q5.3 4.0 6.6 4.0 Z" fill="#f00" fill-rule="evenodd"/></svg>
<div class="t" style="left:991px;top:859.00px;font-size:11px;line-height:11px;color:#2a14d2">комсомольская музыкальная школа</div>
<div class="t" style="right:372px;top:859.00px;font-size:11px;line-height:11px;text-align:right;">2</div>
<svg class="ic" style="left:971px;top:891px" width="15" height="15" viewBox="0 0 15 15"><path d="M1.6 0.8 H9.5 L13.8 7.3 L9.5 13.8 H1.6 Q0.8 13.8 0.8 13 V1.6 Q0.8 0.8 1.6 0.8 Z" fill="#e9ecec" stroke="#b3b3b3" stroke-width="1"/><path d="M8.6 2.9 H6.4 Q3.9 2.9 3.9 5.6 Q3.9 7.6 5.6 8.3 L3.8 12.2 H5.3 L6.9 8.6 H7.3 V12.2 H8.6 Z M7.3 4.0 V7.6 H6.7 Q5.3 7.6 5.3 5.8 Q5.3 4.0 6.6 4.0 Z" fill="#f00" fill-rule="evenodd"/></svg>
<div class="t" style="left:991px;top:893.00px;font-size:11px;line-height:11px;color:#2a14d2">новости: учащиеся 8 класса приняли…</div>
<div class="t" style="right:372px;top:893.00px;font-size:11px;line-height:11px;text-align:right;">2</div>
<svg class="ic" style="left:971px;top:924px" width="15" height="15" viewBox="0 0 15 15"><path d="M1.6 0.8 H9.5 L13.8 7.3 L9.5 13.8 H1.6 Q0.8 13.8 0.8 13 V1.6 Q0.8 0.8 1.6 0.8 Z" fill="#e9ecec" stroke="#b3b3b3" stroke-width="1"/><path d="M8.6 2.9 H6.4 Q3.9 2.9 3.9 5.6 Q3.9 7.6 5.6 8.3 L3.8 12.2 H5.3 L6.9 8.6 H7.3 V12.2 H8.6 Z M7.3 4.0 V7.6 H6.7 Q5.3 7.6 5.3 5.8 Q5.3 4.0 6.6 4.0 Z" fill="#f00" fill-rule="evenodd"/></svg>
<div class="t" style="left:991px;top:926.00px;font-size:11px;line-height:11px;color:#2a14d2">155150, ивановская область, город к…</div>
<div class="t" style="right:372px;top:926.00px;font-size:11px;line-height:11px;text-align:right;">1</div>
<div style="position:absolute;left:0;top:936px;width:1664px;height:1px;background:#1b1d20"></div>
</body></html>
